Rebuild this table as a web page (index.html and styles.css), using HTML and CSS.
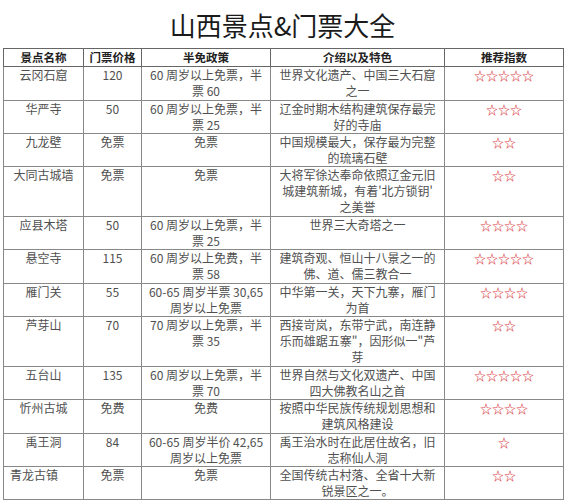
FILE: index.html
```html
<!DOCTYPE html>
<html lang="zh">
<head>
<meta charset="utf-8">
<title>山西景点&amp;门票大全</title>
<link rel="stylesheet" href="styles.css">
</head>
<body>
<h1 class="title">山西景点&amp;门票大全</h1>
<table class="sheet">
  <colgroup>
    <col class="c-name"><col class="c-price"><col class="c-policy"><col class="c-intro"><col class="c-rate">
  </colgroup>
  <thead>
    <tr><th>景点名称</th><th>门票价格</th><th>半免政策</th><th>介绍以及特色</th><th>推荐指数</th></tr>
  </thead>
  <tbody>
    <tr class="h34"><td>云冈石窟</td><td>120</td><td>60 周岁以上免票，半票 60</td><td>世界文化遗产、中国三大石窟之一</td><td class="stars">☆☆☆☆☆</td></tr>
    <tr class="h32"><td>华严寺</td><td>50</td><td>60 周岁以上免票，半票 25</td><td>辽金时期木结构建筑保存最完好的寺庙</td><td class="stars">☆☆☆</td></tr>
    <tr class="h32"><td>九龙壁</td><td>免票</td><td>免票</td><td>中国规模最大，保存最为完整的琉璃石壁</td><td class="stars">☆☆</td></tr>
    <tr class="h50"><td>大同古城墙</td><td>免票</td><td>免票</td><td>大将军徐达奉命依照辽金元旧城建筑新城，有着'北方锁钥'<wbr>之美誉</td><td class="stars">☆☆</td></tr>
    <tr class="h33"><td>应县木塔</td><td>50</td><td>60 周岁以上免票，半票 25</td><td>世界三大奇塔之一</td><td class="stars">☆☆☆☆</td></tr>
    <tr class="h34"><td>悬空寺</td><td>115</td><td>60 周岁以上免费，半票 58</td><td>建筑奇观、恒山十八景之一的佛、道、儒三教合一</td><td class="stars">☆☆☆☆☆</td></tr>
    <tr class="h32"><td>雁门关</td><td>55</td><td>60-65 周岁半票 30,65 周岁以上免票</td><td>中华第一关，天下九寨，雁门为首</td><td class="stars">☆☆☆☆</td></tr>
    <tr class="h50"><td>芦芽山</td><td>70</td><td>70 周岁以上免票，半票 35</td><td>西接岢岚，东带宁武，南连静乐而雄踞五寨"，因形似一"芦芽</td><td class="stars">☆☆</td></tr>
    <tr class="h32"><td>五台山</td><td>135</td><td>60 周岁以上免票，半票 70</td><td>世界自然与文化双遗产、中国四大佛教名山之首</td><td class="stars">☆☆☆☆☆</td></tr>
    <tr class="h34"><td>忻州古城</td><td>免费</td><td>免费</td><td>按照中华民族传统规划思想和建筑风格建设</td><td class="stars">☆☆☆☆</td></tr>
    <tr class="h32"><td>禹王洞</td><td>84</td><td>60-65 周岁半价 42,65 周岁以上免票</td><td>禹王治水时在此居住故名，旧志称仙人洞</td><td class="stars">☆</td></tr>
    <tr class="h32"><td class="left">青龙古镇</td><td>免票</td><td>免票</td><td>全国传统古村落、全省十大新锐景区之一。</td><td class="stars">☆☆</td></tr>
  </tbody>
</table>
</body>
</html>
```
FILE: styles.css
```css
html, body {
  margin: 0;
  padding: 0;
  background: #fff;
}
body {
  font-family: "Noto Sans CJK SC", "Noto Sans", sans-serif;
  color: #505050;
}
.title {
  margin: 0;
  height: 48px;
  line-height: 50px;
  text-align: center;
  font-size: 26px;
  font-weight: 400;
  color: #1a1a1a;
}
.sheet {
  margin-left: 3px;
  width: 560px;
  table-layout: fixed;
  border-collapse: collapse;
  border: 1px solid #555;
}
.c-name { width: 80px; }
.c-price { width: 58px; }
.c-policy { width: 129px; }
.c-intro { width: 174px; }
.c-rate { width: 119px; }
.sheet th {
  height: 17px;
  padding: 0;
  font-size: 11.5px;
  line-height: 17px;
  font-weight: 700;
  color: #222;
  border: 1px solid #666;
  text-align: center;
}
.sheet td {
  padding: 0 4px;
  font-size: 12px;
  line-height: 16px;
  text-align: center;
  vertical-align: top;
  border: 1px solid #888;
  word-break: break-all;
}
.sheet td:nth-child(4) {
  padding: 0 7px;
}
.sheet tr.h32 td { height: 32px; }
.sheet tr.h33 td { height: 32px; }
.sheet tr.h34 td { height: 33px; }
.sheet tr.h50 td { height: 49px; }
.sheet td.left {
  text-align: left;
  padding-left: 6px;
}
.sheet td.stars {
  color: #d8424a;
  font-size: 12px;
  font-weight: 700;
  line-height: 17px;
}
```
